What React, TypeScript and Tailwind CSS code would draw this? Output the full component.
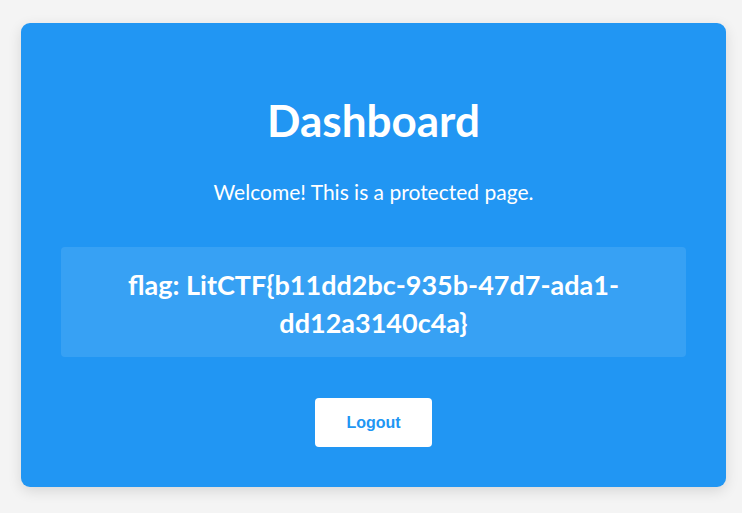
export default function App() {
  return (
    <div className="min-h-[513px] bg-[#f4f4f4] pl-[21px] pt-[23px] pb-[26px]" style={{ fontFamily: 'Lato, "Noto Sans", sans-serif' }}>
      <div className="w-[705px] rounded-[9px] bg-[#2196f3] px-10 pt-10 pb-10 text-center text-white shadow-[0_4px_14px_rgba(0,0,0,0.12)]">
        <h1 className="mt-[31px] text-[44px] font-bold leading-[1.2]">Dashboard</h1>
        <p className="mt-[30px] text-[21px] leading-[1.4]">Welcome! This is a protected page.</p>
        <div className="mt-[41px] flex h-[110px] items-center justify-center rounded-[4px] bg-white/10 px-12 pt-[4px]">
          <p className="text-[27px] font-bold leading-[38px]">flag: LitCTF&#123;b11dd2bc-935b-47d7-ada1-dd12a3140c4a&#125;</p>
        </div>
        <div className="mt-[41px] flex justify-center">
          <button className="h-[49px] w-[117px] rounded-[4px] bg-white text-[16px] font-bold text-[#2196f3]" style={{ fontFamily: '"Liberation Sans", Arial, sans-serif' }}>
            Logout
          </button>
        </div>
      </div>
    </div>
  );
}
